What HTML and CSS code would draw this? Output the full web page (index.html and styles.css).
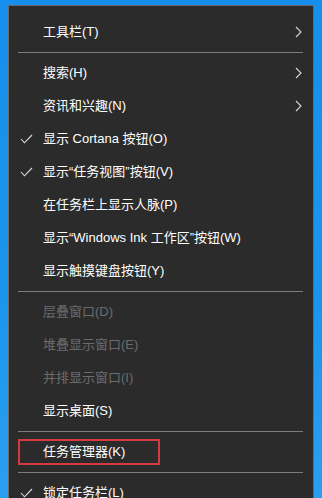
FILE: index.html
```html
<!DOCTYPE html>
<html lang="zh-CN">
<head>
    <meta charset="UTF-8">
    <meta name="viewport" content="width=device-width, initial-scale=1.0">
    <title>任务栏菜单</title>
    <link rel="stylesheet" href="styles.css">
</head>
<body>
<div class="menu">
    <div class="item">
        <span class="label">工具栏(T)</span>
        <svg class="arrow" width="7" height="12" viewBox="0 0 7 12"><path d="M1 1 L6 6 L1 11" /></svg>
    </div>
    <div class="sep"></div>
    <div class="item">
        <span class="label">搜索(H)</span>
        <svg class="arrow" width="7" height="12" viewBox="0 0 7 12"><path d="M1 1 L6 6 L1 11" /></svg>
    </div>
    <div class="item">
        <span class="label">资讯和兴趣(N)</span>
        <svg class="arrow" width="7" height="12" viewBox="0 0 7 12"><path d="M1 1 L6 6 L1 11" /></svg>
    </div>
    <div class="item">
        <svg class="check" width="13" height="10" viewBox="0 0 13 10"><path d="M1 5 L4.5 8.8 L12 1" /></svg>
        <span class="label">显示 Cortana 按钮(O)</span>
    </div>
    <div class="item">
        <svg class="check" width="13" height="10" viewBox="0 0 13 10"><path d="M1 5 L4.5 8.8 L12 1" /></svg>
        <span class="label">显示“任务视图”按钮(V)</span>
    </div>
    <div class="item">
        <span class="label">在任务栏上显示人脉(P)</span>
    </div>
    <div class="item">
        <span class="label">显示“Windows Ink 工作区”按钮(W)</span>
    </div>
    <div class="item">
        <span class="label">显示触摸键盘按钮(Y)</span>
    </div>
    <div class="sep"></div>
    <div class="item disabled">
        <span class="label">层叠窗口(D)</span>
    </div>
    <div class="item disabled">
        <span class="label">堆叠显示窗口(E)</span>
    </div>
    <div class="item disabled">
        <span class="label">并排显示窗口(I)</span>
    </div>
    <div class="item">
        <span class="label">显示桌面(S)</span>
    </div>
    <div class="sep"></div>
    <div class="item marked">
        <span class="label">任务管理器(K)</span>
        <div class="highlight"></div>
    </div>
    <div class="sep"></div>
    <div class="item">
        <svg class="check" width="13" height="10" viewBox="0 0 13 10"><path d="M1 5 L4.5 8.8 L12 1" /></svg>
        <span class="label">锁定任务栏(L)</span>
    </div>
</div>
</body>
</html>
```

FILE: styles.css
```css
html, body {
    height: 100%;
}

body {
    margin: 0;
    padding: 5px 8px 0 8px;
    box-sizing: border-box;
    overflow: hidden;
    background: linear-gradient(180deg, #168fec 0%, #1a95ee 60%, #2a9ff0 100%);
    font-family: "Liberation Sans", "Noto Sans CJK SC", sans-serif;
}

.menu {
    background-color: #2b2b2b;
    border: 1px solid #6a6a6a;
    border-bottom: none;
    padding-top: 9px;
    min-height: 520px;
}

.item {
    position: relative;
    display: flex;
    align-items: center;
    height: 33px;
    padding: 0 11px 0 34px;
    color: #ffffff;
    font-size: 13px;
}

.item.disabled {
    color: #6b6b6b;
}

.label {
    flex: 1;
    line-height: 16px;
    white-space: nowrap;
}

.check {
    position: absolute;
    left: 11px;
    top: 12px;
    fill: none;
    stroke: #e0e0e0;
    stroke-width: 1.1;
}

.arrow {
    fill: none;
    stroke: #d8d8d8;
    stroke-width: 1.1;
}

.sep {
    height: 1px;
    margin: 3.5px 10px 3.5px 9px;
    background-color: #7d7d7d;
}

.highlight {
    position: absolute;
    left: 9px;
    top: 4px;
    width: 142px;
    height: 26px;
    box-sizing: border-box;
    border: 2px solid #d8383f;
}
```
